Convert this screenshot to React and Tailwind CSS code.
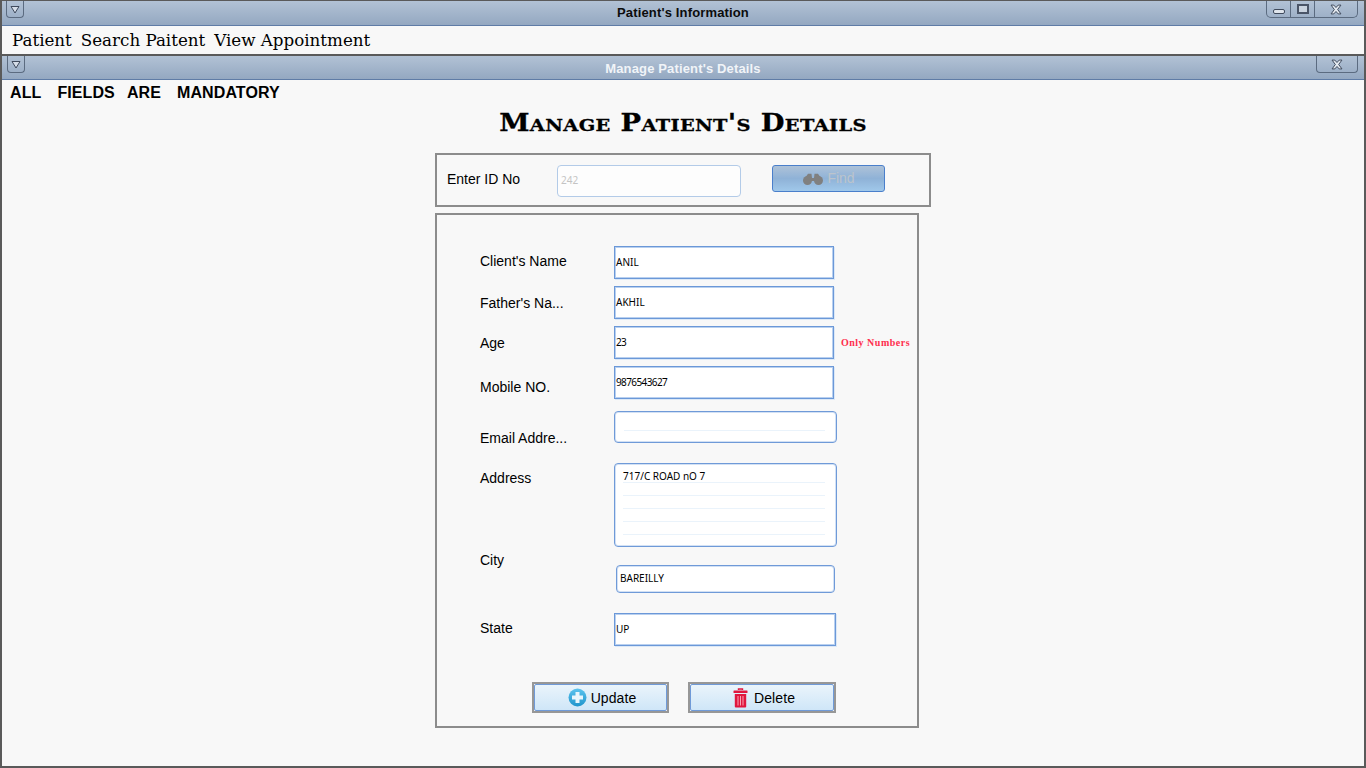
const SANS = "font-['Liberation_Sans',Arial,sans-serif]";

function Chevron() {
  return (
    <svg width="10" height="9" viewBox="0 0 10 9" fill="none">
      <path d="M1 1.5H9L5 8Z" fill="#d5dde8" stroke="#3f4a5c" strokeWidth="1" />
    </svg>
  );
}

function CloseGlyph() {
  return (
    <svg width="14" height="11" viewBox="0 0 12 10">
      <path d="M1.5 1H4L6 3.2 8 1H10.5L7.5 5 10.5 9H8L6 6.8 4 9H1.5L4.5 5Z" fill="#e6ebf1" stroke="#3f4a5c" strokeWidth="0.9" />
    </svg>
  );
}

function TitleBar({ title, light, height, left, children }) {
  return (
    <div className={`${height} shrink-0 grid grid-cols-[1fr_auto_1fr] items-start bg-gradient-to-b from-[#b2c2d5] to-[#94a8c1] border-b border-[#5f7ca6]`}>
      <div className={`flex ${left}`}>
        <div className="w-[18px] h-[17px] border border-t-0 border-[#5b6b80] rounded-b-[4px] flex items-center justify-center">
          <Chevron />
        </div>
      </div>
      <div className={`text-center text-[13px] tracking-[0.15px] font-bold ${SANS} ${light ? "leading-[26px] text-[#f1f4f8]" : "leading-[24px] text-[#0c0c0c]"}`}>{title}</div>
      <div className="flex justify-end">{children}</div>
    </div>
  );
}

function Labeled({ label, mt, labelTop, children }) {
  return (
    <div className={`flex items-start ${mt}`}>
      <div className={`w-[134px] shrink-0 text-[14px] leading-[16px] text-black ${SANS} ${labelTop}`}>{label}</div>
      {children}
    </div>
  );
}

function SquareInput({ value, w = "w-[220px]", digits }) {
  return (
    <div className={`${w} h-[33px] bg-white border border-[#6b98d8] shadow-[inset_0_0_0_1px_#b9d0ef,1px_1px_0_#dce8f6] pl-[1px] flex items-center text-[10px] text-black font-['Noto_Sans',sans-serif] ${digits ? "tracking-[-0.6px]" : ""}`}>
      {value}
    </div>
  );
}

function Lines({ count }) {
  return (
    <div className="flex flex-col gap-[12px]">
      {Array.from({ length: count }).map((_, i) => (
        <div key={i} className="h-px bg-[#eaf3fb]" />
      ))}
    </div>
  );
}

export default function App() {
  return (
    <div className={`w-[1366px] h-[768px] overflow-hidden flex flex-col bg-[#f8f8f8] border-2 border-[#5a5a5a] border-t-[1px] ${SANS}`}>
      <TitleBar title="Patient's Information" height="h-[25px]" left="ml-[4px]">
        <div className="flex h-[17px] mr-[6px] border border-t-0 border-[#5b6b80] rounded-b-[5px]">
          <div className="w-[24px] flex items-center justify-center border-r border-[#5b6b80]">
            <div className="w-[12px] h-[5px] mt-[5px] bg-[#dfe5ec] border border-[#3f4a5c] rounded-[2px]" />
          </div>
          <div className="w-[24px] flex items-center justify-center border-r border-[#5b6b80]">
            <div className="w-[12px] h-[10px] border-2 border-[#4a5568] bg-[#c9d3df]" />
          </div>
          <div className="w-[42px] flex items-center justify-center">
            <CloseGlyph />
          </div>
        </div>
      </TitleBar>

      <div className="h-[28px] shrink-0 bg-[#f8f8f8] flex items-center pl-[10px] pt-[2px] text-[16.7px] text-black font-['DejaVu_Serif',serif]">
        <span>Patient</span>
        <span className="ml-[9px]">Search Paitent</span>
        <span className="ml-[9px]">View Appointment</span>
      </div>

      <div className="flex-1 flex flex-col border-t-2 border-[#5a5a5a]">
        <TitleBar title="Manage Patient's Details" light height="h-[24px]" left="ml-[5px]">
          <div className="w-[42px] h-[17px] mr-[6px] border border-t-0 border-[#5b6b80] rounded-b-[4px] flex items-center justify-center">
            <CloseGlyph />
          </div>
        </TitleBar>

        <div className="flex pl-[8px] pt-[4px] text-[16px] tracking-[0.1px] leading-[18px] font-bold text-black">
          <span>ALL</span>
          <span className="ml-[16px]">FIELDS</span>
          <span className="ml-[12px]">ARE</span>
          <span className="ml-[16px]">MANDATORY</span>
        </div>

        <div className="text-center mt-[6px] text-[24px] leading-[30px] text-black font-bold font-['DejaVu_Serif',serif] [font-variant:small-caps] tracking-[0.3px] scale-x-[1.14] [-webkit-text-stroke:0.3px_black]">
          Manage Patient's Details
        </div>

        <div className="ml-[433px] mt-[15px] w-[496px] h-[54px] border-2 border-[#8c8c8c] flex items-start">
          <div className="ml-[10px] mt-[16px] w-[110px] text-[14px] leading-[16px] text-black">Enter ID No</div>
          <div className="mt-[10px] w-[184px] h-[32px] bg-[#fdfdfd] border border-[#b3cbe8] rounded-[4px] flex items-center pl-[3px] pb-[2px] text-[10px] text-[#c4c4c4] font-['Noto_Sans',sans-serif]">
            242
          </div>
          <div className="ml-[31px] mt-[10px] w-[113px] h-[27px] rounded-[3px] border border-[#4a7fcb] bg-gradient-to-b from-[#aec2d8] via-[#8fb2d7] to-[#a0c8ea] flex items-center justify-center gap-[4px] pl-[1px] text-[14px] text-[#bcc4cc]">
            <svg width="20" height="12" viewBox="0 0 20 12" fill="#808080">
              <circle cx="4.5" cy="7.5" r="4.5" />
              <circle cx="15.5" cy="7.5" r="4.5" />
              <path d="M2 5 5 .8H8.5L9 5H11L11.5 .8H15L18 5 15 8H5Z" />
            </svg>
            <span>Find</span>
          </div>
        </div>

        <div className="ml-[433px] mt-[6px] w-[484px] h-[515px] border-2 border-[#8c8c8c] pl-[43px] pt-[31px] flex flex-col">
          <Labeled label="Client's Name" labelTop="mt-[7px]">
            <SquareInput value="ANIL" />
          </Labeled>
          <Labeled label="Father's Na..." mt="mt-[7px]" labelTop="mt-[9px]">
            <SquareInput value="AKHIL" />
          </Labeled>
          <Labeled label="Age" mt="mt-[7px]" labelTop="mt-[9px]">
            <div className="flex items-center">
              <SquareInput value="23" digits />
              <span className="ml-[7px] w-[70px] whitespace-nowrap text-[10px] font-bold text-[#ff2e4d] font-['Liberation_Serif',serif] tracking-[0.5px]">Only Numbers</span>
            </div>
          </Labeled>
          <Labeled label="Mobile NO." mt="mt-[7px]" labelTop="mt-[13px]">
            <SquareInput value="9876543627" digits />
          </Labeled>
          <Labeled label="Email Addre..." mt="mt-[12px]" labelTop="mt-[19px]">
            <div className="w-[223px] h-[32px] bg-white border border-[#6f9ad8] shadow-[inset_0_0_0_1px_#d3e1f4] rounded-[4px] pt-[18px] pl-[9px] pr-[11px]">
              <Lines count={1} />
            </div>
          </Labeled>
          <Labeled label="Address" mt="mt-[17px]" labelTop="mt-[7px]">
            <div className="w-[223px] h-[84px] bg-white border border-[#6f9ad8] shadow-[inset_0_0_0_1px_#d3e1f4] rounded-[4px] pt-[6px] pl-[8px] pr-[11px]">
              <div className="h-[12px] text-[10px] leading-[13px] text-black whitespace-nowrap font-['Noto_Sans',sans-serif]">717/C ROAD nO 7</div>
              <Lines count={5} />
            </div>
          </Labeled>
          <Labeled label="City" mt="mt-[5px]" labelTop="mt-0">
            <div className="mt-[13px] ml-[2px] w-[219px] h-[28px] bg-white border border-[#6f9ad8] shadow-[inset_0_0_0_1px_#d3e1f4] rounded-[4px] pl-[3px] pb-[2px] flex items-center text-[10px] text-black font-['Noto_Sans',sans-serif]">
              BAREILLY
            </div>
          </Labeled>
          <Labeled label="State" mt="mt-[20px]" labelTop="mt-[7px]">
            <SquareInput value="UP" w="w-[222px]" />
          </Labeled>

          <div className="flex mt-[36px] ml-[52px] text-[14px] tracking-[0.1px] text-black">
            <div className="w-[137px] h-[31px] border-2 border-[#979797]">
              <div className="w-full h-full border border-[#6f9ad8] rounded-[2px] bg-gradient-to-b from-[#eaf4fb] to-[#cfe6f8] flex items-center justify-center gap-[4px] pl-[3px]">
                <svg width="19" height="19" viewBox="0 0 19 19">
                  <defs>
                    <linearGradient id="plusG" x1="0" y1="0" x2="0" y2="1">
                      <stop offset="0" stopColor="#5cc4ee" />
                      <stop offset="1" stopColor="#1f94cc" />
                    </linearGradient>
                  </defs>
                  <circle cx="9.5" cy="9.5" r="9" fill="url(#plusG)" />
                  <path d="M7.5 4H11.5V7.5H15V11.5H11.5V15H7.5V11.5H4V7.5H7.5Z" fill="#e8f6fc" />
                </svg>
                <span className="pt-px">Update</span>
              </div>
            </div>
            <div className="ml-[19px] w-[148px] h-[31px] border-2 border-[#979797]">
              <div className="w-full h-full border border-[#6f9ad8] rounded-[2px] bg-gradient-to-b from-[#eaf4fb] to-[#cfe6f8] flex items-center justify-center gap-[6px] pl-[4px]">
                <svg width="15" height="20" viewBox="0 0 15 20" fill="none">
                  <path d="M5.5 2V1H9.5V2" stroke="#e0173f" strokeWidth="1.4" />
                  <rect x="0.5" y="2.5" width="14" height="2.5" rx="0.5" fill="#e0173f" />
                  <path d="M1.8 6H13.2V18.5A1 1 0 0 1 12.2 19.5H2.8A1 1 0 0 1 1.8 18.5Z" fill="#e0173f" />
                  <path d="M5 8V17.5M7.5 8V17.5M10 8V17.5" stroke="#f7a6b6" strokeWidth="1" />
                </svg>
                <span className="pt-px">Delete</span>
              </div>
            </div>
          </div>
        </div>
      </div>
    </div>
  );
}
